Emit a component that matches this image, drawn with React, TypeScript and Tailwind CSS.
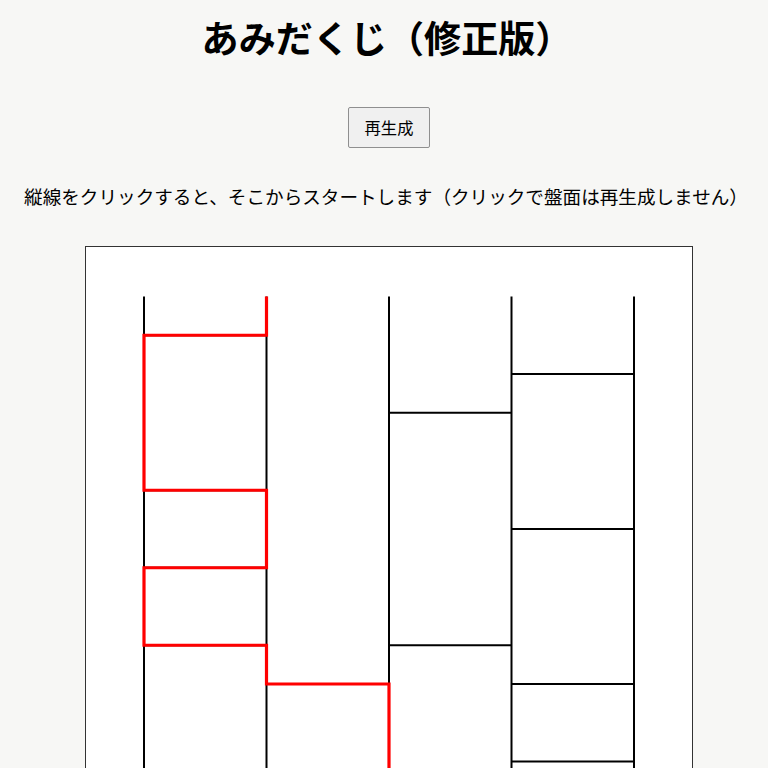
import React from "react";

const XS = [58, 180.5, 303, 425.5, 548];
const Y0 = 49.5;
const STEP = 38.75;
const y = (k: number) => Y0 + STEP * k;

const RUNGS: [number, number][] = [
  [0, 1], [0, 5], [0, 7], [0, 9],
  [1, 10],
  [2, 3], [2, 9],
  [3, 2], [3, 6], [3, 10], [3, 12],
];

const PATH: [number, number][] = [
  [1, 0], [1, 1], [0, 1], [0, 5], [1, 5], [1, 7], [0, 7], [0, 9], [1, 9], [1, 10], [2, 10], [2, 14],
];

export default function App() {
  const bottom = y(14);
  const d = PATH.map(([li, k], i) => `${i === 0 ? "M" : "L"}${XS[li]} ${k === 14 ? bottom : y(k)}`).join(" ");
  return (
    <div className="min-h-screen bg-[#f7f7f5] pl-[10px] flex flex-col items-center font-['Noto_Sans_CJK_JP',sans-serif] text-black">
      <h1 className="mt-[19px] mr-[4px] text-[37.1px] font-bold leading-none">あみだくじ（修正版）</h1>
      <button className="mt-[51px] h-[41px] w-[82px] rounded-[2px] border border-[#8f8f8f] bg-[#f0f0f0] text-[16.3px] leading-none text-black">
        再生成
      </button>
      <p className="mt-[35px] mr-[6px] text-[18.6px] leading-[26px] whitespace-nowrap">
        縦線をクリックすると、そこからスタートします（クリックで盤面は再生成しません）
      </p>
      <div className="mt-[37px] w-[608px] border border-[#333] bg-white">
        <svg width="606" height="600" viewBox="0 0 606 600" className="block">
          {XS.map((x, i) => (
            <line key={i} x1={x} y1={Y0} x2={x} y2={bottom} stroke="#000" strokeWidth={2} />
          ))}
          {RUNGS.map(([li, k], i) => (
            <line key={i} x1={XS[li]} y1={y(k)} x2={XS[li + 1]} y2={y(k)} stroke="#000" strokeWidth={2} />
          ))}
          <path d={d} fill="none" stroke="#ff0000" strokeWidth={3.2} strokeLinejoin="miter" />
        </svg>
      </div>
    </div>
  );
}
